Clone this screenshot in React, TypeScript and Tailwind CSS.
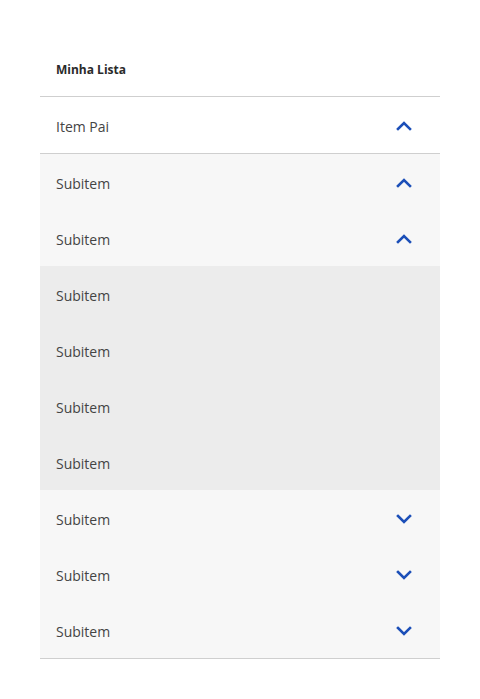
import React from "react";

type Row = { label: string; bg: string; icon?: "up" | "down" };

const ROWS: Row[] = [
  { label: "Subitem", bg: "bg-[#f7f7f7]", icon: "up" },
  { label: "Subitem", bg: "bg-[#f7f7f7]", icon: "up" },
  { label: "Subitem", bg: "bg-[#ececec]" },
  { label: "Subitem", bg: "bg-[#ececec]" },
  { label: "Subitem", bg: "bg-[#ececec]" },
  { label: "Subitem", bg: "bg-[#ececec]" },
  { label: "Subitem", bg: "bg-[#f7f7f7]", icon: "down" },
  { label: "Subitem", bg: "bg-[#f7f7f7]", icon: "down" },
  { label: "Subitem", bg: "bg-[#f7f7f7]", icon: "down" },
];

function Chevron({ dir }: { dir: "up" | "down" }) {
  return (
    <svg width="24" height="24" viewBox="0 0 24 24" className="mt-[1px] text-[#1c4fb8]">
      <polyline
        points={dir === "up" ? "6,15 12,9 18,15" : "6,9 12,15 18,9"}
        fill="none"
        stroke="currentColor"
        strokeWidth="2.6"
        strokeLinecap="square"
        strokeLinejoin="miter"
      />
    </svg>
  );
}

function ListRow({ label, bg, icon }: Row) {
  return (
    <div className={`flex h-14 items-center justify-between pl-4 pr-6 ${bg}`}>
      <span className="pt-[3px] text-[14px] text-[#444]">{label}</span>
      {icon && <Chevron dir={icon} />}
    </div>
  );
}

export default function App() {
  return (
    <div className="min-h-screen bg-white px-10 pt-[41px]" style={{ fontFamily: "'Open Sans', Lato, sans-serif" }}>
      <div className="flex h-14 items-center border-b border-[#cfcfcf] px-4">
        <span className="pt-[2px] text-[12px] font-bold text-[#2a2a2a]">Minha Lista</span>
      </div>
      <div className="border-b border-[#cfcfcf]">
        <ListRow label="Item Pai" bg="bg-white" icon="up" />
      </div>
      <div className="border-b border-[#cfcfcf]">
        {ROWS.map((r, i) => (
          <ListRow key={i} {...r} />
        ))}
      </div>
    </div>
  );
}
